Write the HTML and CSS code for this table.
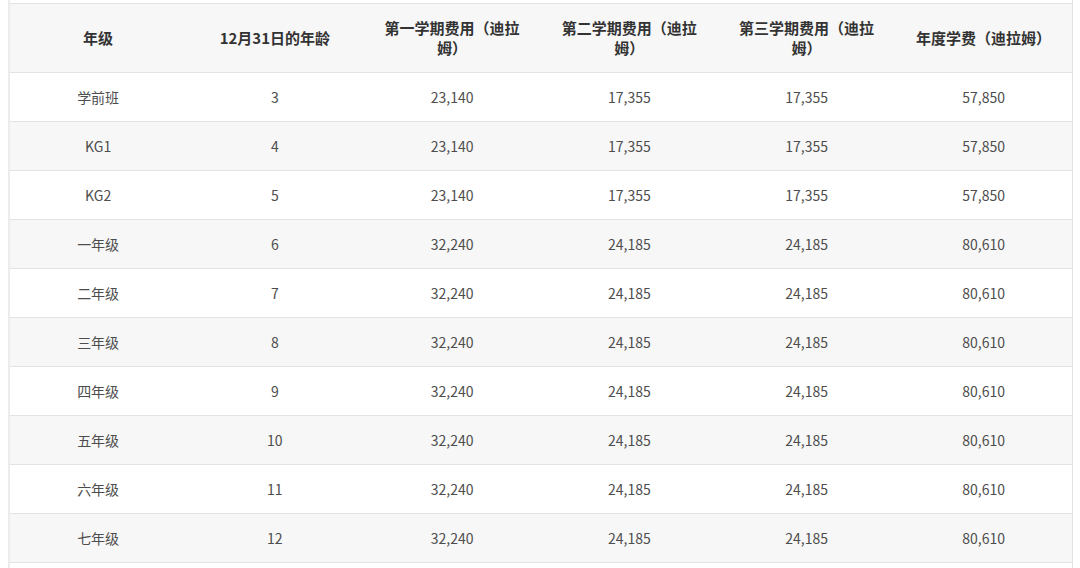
FILE: index.html
```html
<!DOCTYPE html>
<html lang="zh-CN">
<head>
<meta charset="utf-8">
<title>学费表</title>
<link rel="stylesheet" href="styles.css">
</head>
<body>
<div class="wrap">
  <div class="stub"></div>
  <table class="fees">
    <thead>
      <tr>
        <th>年级</th>
        <th>12月31日的年龄</th>
        <th>第一学期费用（迪拉姆）</th>
        <th>第二学期费用（迪拉姆）</th>
        <th>第三学期费用（迪拉姆）</th>
        <th>年度学费（迪拉姆）</th>
      </tr>
    </thead>
    <tbody>
      <tr><td>学前班</td><td>3</td><td>23,140</td><td>17,355</td><td>17,355</td><td>57,850</td></tr>
      <tr><td>KG1</td><td>4</td><td>23,140</td><td>17,355</td><td>17,355</td><td>57,850</td></tr>
      <tr><td>KG2</td><td>5</td><td>23,140</td><td>17,355</td><td>17,355</td><td>57,850</td></tr>
      <tr><td>一年级</td><td>6</td><td>32,240</td><td>24,185</td><td>24,185</td><td>80,610</td></tr>
      <tr><td>二年级</td><td>7</td><td>32,240</td><td>24,185</td><td>24,185</td><td>80,610</td></tr>
      <tr><td>三年级</td><td>8</td><td>32,240</td><td>24,185</td><td>24,185</td><td>80,610</td></tr>
      <tr><td>四年级</td><td>9</td><td>32,240</td><td>24,185</td><td>24,185</td><td>80,610</td></tr>
      <tr><td>五年级</td><td>10</td><td>32,240</td><td>24,185</td><td>24,185</td><td>80,610</td></tr>
      <tr><td>六年级</td><td>11</td><td>32,240</td><td>24,185</td><td>24,185</td><td>80,610</td></tr>
      <tr><td>七年级</td><td>12</td><td>32,240</td><td>24,185</td><td>24,185</td><td>80,610</td></tr>
    </tbody>
  </table>
  <div class="stub stub-bottom"></div>
</div>
</body>
</html>
```
FILE: styles.css
```css
html, body {
  margin: 0;
  padding: 0;
  background: #ffffff;
  overflow: hidden;
}
body {
  font-family: "Noto Sans CJK SC", "Noto Sans", sans-serif;
  color: #4a4a4a;
}
.wrap {
  padding-left: 8px;
  width: 1065px;
}
.stub {
  height: 3px;
  border-left: 2px solid #ececec;
  border-right: 1px solid #e3e3e3;
}
.stub-bottom {
  height: 10px;
}
.fees {
  width: 1065px;
  border-collapse: collapse;
  table-layout: fixed;
  border-left: 2px solid #ececec;
  border-right: 1px solid #e3e3e3;
  border-bottom: 1px solid #e3e3e3;
}
.fees th,
.fees td {
  text-align: center;
  vertical-align: middle;
  border-top: 1px solid #e3e3e3;
  padding: 0 14px;
}
.fees thead tr {
  height: 69px;
  background: #f7f7f7;
}
.fees th {
  font-size: 15px;
  font-weight: 700;
  color: #333333;
  line-height: 20px;
}
.fees tbody tr {
  height: 49px;
}
.fees td {
  font-size: 14px;
  line-height: 20px;
  color: #4d4d4d;
}
.fees tbody tr:nth-child(even) {
  background: #f7f7f7;
}
```
